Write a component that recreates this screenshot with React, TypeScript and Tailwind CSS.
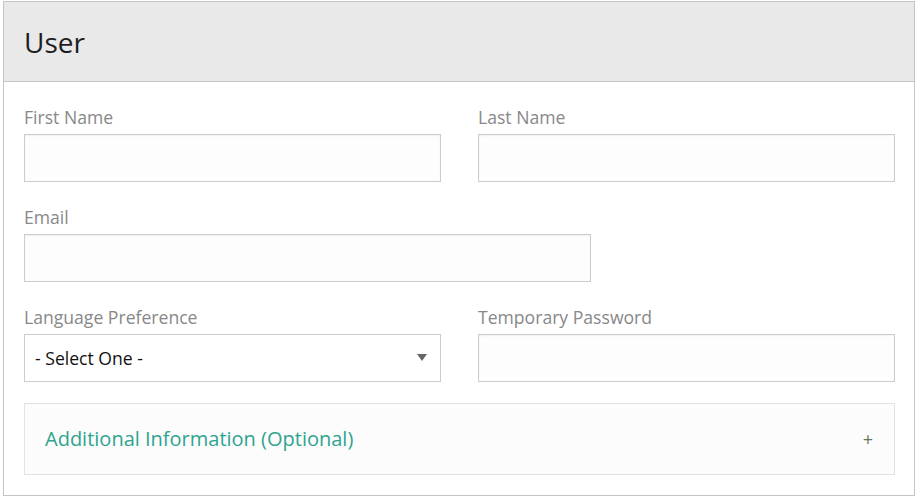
import { useState } from 'react'

function Field({
  label,
  className = '',
  children,
}: {
  label: string
  className?: string
  children: React.ReactNode
}) {
  return (
    <div className={className}>
      <label className="mb-[5px] block text-[17.6px] leading-[24px] text-[#888888]">
        {label}
      </label>
      {children}
    </div>
  )
}

const INPUT_CLASS =
  'block h-[48px] w-full border border-[#cccccc] bg-[#fdfdfd] px-[10px] text-[17.6px] text-[#222] shadow-[inset_0_1px_2px_rgba(0,0,0,0.05)] outline-none'

export default function App() {
  const [open, setOpen] = useState(false)

  return (
    <div
      className="min-h-[501px] bg-white pl-[3px] pt-[1px]"
      style={{ fontFamily: '"Open Sans", "Noto Sans", sans-serif' }}
    >
      <div className="w-[912px] border border-[#c4c4c4] bg-white">
        {/* header */}
        <div className="flex h-[80px] items-center border-b border-[#c4c4c4] bg-[#e9e9e9] pl-[20px]">
          <h2 className="text-[28px] leading-none text-[#1e1e1e]">User</h2>
        </div>

        {/* form body */}
        <div className="pb-[20px] pl-[20px] pr-[19px] pt-[23px]">
          <div className="grid grid-cols-2 gap-x-[37px]">
            <Field label="First Name">
              <input type="text" className={INPUT_CLASS} />
            </Field>
            <Field label="Last Name">
              <input type="text" className={INPUT_CLASS} />
            </Field>
          </div>

          <Field label="Email" className="mt-[23px] w-[567px]">
            <input type="email" className={INPUT_CLASS} />
          </Field>

          <div className="mt-[23px] grid grid-cols-2 gap-x-[37px]">
            <Field label="Language Preference">
              <div className="relative">
                <select className="block h-[48px] w-full appearance-none border border-[#cccccc] bg-white pl-[10px] text-[17.6px] text-[#111] outline-none">
                  <option>- Select One -</option>
                  <option>English</option>
                  <option>Español</option>
                  <option>Français</option>
                </select>
                <span className="pointer-events-none absolute right-[14px] top-[20px] h-0 w-0 border-x-[5px] border-t-[7px] border-x-transparent border-t-[#666]" />
              </div>
            </Field>
            <Field label="Temporary Password">
              <input type="password" className={INPUT_CLASS} />
            </Field>
          </div>

          {/* collapsible */}
          <div className="mt-[21px] border border-[#e3e3e3] bg-[#fcfcfc]">
            <button
              type="button"
              onClick={() => setOpen(!open)}
              className="flex h-[70px] w-full items-center justify-between pl-[20px] pr-[21px] text-left"
            >
              <span className="text-[20px] text-[#2ea48f]">Additional Information (Optional)</span>
              <span className="text-[18px] leading-none text-[#5f7a5a]">
                {open ? '−' : '+'}
              </span>
            </button>
          </div>
        </div>
      </div>
    </div>
  )
}
